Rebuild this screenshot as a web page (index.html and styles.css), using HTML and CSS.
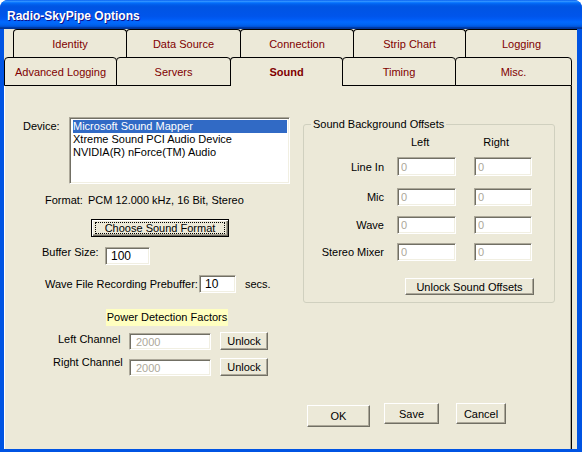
FILE: index.html
```html
<!DOCTYPE html>
<html lang="en">

<head>
    <meta charset="UTF-8">
    <meta name="viewport" content="width=device-width, initial-scale=1.0">
    <title>Radio-SkyPipe Options</title>
    <link rel="stylesheet" href="styles.css">
</head>

<body>
    <div class="window">
        <div class="titlebar">Radio-SkyPipe Options</div>
        <div class="client">
            <div class="tabrow back">
                <div class="tab">Identity</div>
                <div class="tab">Data Source</div>
                <div class="tab">Connection</div>
                <div class="tab">Strip Chart</div>
                <div class="tab">Logging</div>
            </div>
            <div class="tabrow front">
                <div class="tab">Advanced Logging</div>
                <div class="tab">Servers</div>
                <div class="tab active">Sound</div>
                <div class="tab">Timing</div>
                <div class="tab">Misc.</div>
            </div>
            <div class="panel">
                <div class="panel_body">
                    <div class="left_col">
                        <div class="device_row">
                            <label class="device_label">Device:</label>
                            <div class="listbox">
                                <div class="item selected">Microsoft Sound Mapper</div>
                                <div class="item">Xtreme Sound PCI Audio Device</div>
                                <div class="item">NVIDIA(R) nForce(TM) Audio</div>
                            </div>
                        </div>
                        <p class="format"><span class="format_label">Format:</span>PCM 12.000 kHz, 16 Bit, Stereo</p>
                        <button class="btn focused choose"><span>Choose Sound Format</span></button>
                        <div class="row buffer_row">
                            <label>Buffer Size:</label>
                            <input class="field" type="text" value="100">
                        </div>
                        <div class="row wave_row">
                            <label>Wave File Recording Prebuffer:</label>
                            <input class="field" type="text" value="10">
                            <span class="secs">secs.</span>
                        </div>
                        <div class="power">Power Detection Factors</div>
                        <div class="row channel_row left_ch">
                            <label>Left Channel</label>
                            <input class="field off" type="text" value="2000" disabled>
                            <button class="btn unlock">Unlock</button>
                        </div>
                        <div class="row channel_row right_ch">
                            <label>Right Channel</label>
                            <input class="field off" type="text" value="2000" disabled>
                            <button class="btn unlock">Unlock</button>
                        </div>
                    </div>

                    <fieldset class="offsets">
                        <legend>Sound Background Offsets</legend>
                        <div class="offset_head">
                            <span>Left</span>
                            <span>Right</span>
                        </div>
                        <div class="offset_row">
                            <label>Line In</label>
                            <input class="field off" type="text" value="0" disabled>
                            <input class="field off" type="text" value="0" disabled>
                        </div>
                        <div class="offset_row">
                            <label>Mic</label>
                            <input class="field off" type="text" value="0" disabled>
                            <input class="field off" type="text" value="0" disabled>
                        </div>
                        <div class="offset_row">
                            <label>Wave</label>
                            <input class="field off" type="text" value="0" disabled>
                            <input class="field off" type="text" value="0" disabled>
                        </div>
                        <div class="offset_row">
                            <label>Stereo Mixer</label>
                            <input class="field off" type="text" value="0" disabled>
                            <input class="field off" type="text" value="0" disabled>
                        </div>
                        <button class="btn unlock_offsets">Unlock Sound Offsets</button>
                    </fieldset>
                </div>

                <div class="footer">
                    <button class="btn ok">OK</button>
                    <button class="btn save">Save</button>
                    <button class="btn cancel">Cancel</button>
                </div>
            </div>
        </div>
    </div>
</body>

</html>
```

FILE: styles.css
```css
* {
    box-sizing: border-box;
}

body {
    margin: 0;
    font-family: "Liberation Sans", Arial, sans-serif;
    font-size: 11px;
    color: #000;
    background: #fff;
}

.window {
    width: 582px;
    height: 452px;
    background: #0054e3;
    border-radius: 8px 8px 0 0;
    display: flex;
    flex-direction: column;
    overflow: hidden;
}

.titlebar {
    height: 29px;
    flex: none;
    display: flex;
    align-items: center;
    padding: 2px 0 0 7px;
    color: #fff;
    font-size: 12px;
    font-weight: bold;
    text-shadow: 1px 1px #0f1089;
    background: linear-gradient(180deg, #0058ee 0%, #3593ff 4%, #288eff 6%, #127dff 8%, #036ffc 10%, #0262ee 14%, #0057e5 20%, #0054e3 24%, #0055eb 56%, #005bf5 66%, #026afe 76%, #0062ef 86%, #0052d6 92%, #0040ab 94%, #003092 100%);
}

.client {
    flex: 1;
    margin: 0 5px 3px 4px;
    background: #ece9d8;
    display: flex;
    flex-direction: column;
}

/* tabs */
.tabrow {
    display: flex;
    flex: none;
}

.tabrow.back {
    height: 28px;
    margin-left: 9px;
}

.tabrow.front {
    height: 29px;
}

.tab {
    display: flex;
    align-items: center;
    justify-content: center;
    margin-left: -1px;
    border: 1px solid #000;
    border-bottom: none;
    border-radius: 4px 4px 0 0;
    background: #ece9d8;
    color: #800000;
}

.tab:first-child {
    margin-left: 0;
}

.back .tab:nth-child(1) { width: 114px; }
.back .tab:nth-child(2) { width: 115px; }
.back .tab:nth-child(3) { width: 114px; }
.back .tab:nth-child(4) { width: 113px; }
.back .tab:nth-child(5) { flex: 1; border-right: none; border-top-right-radius: 0; }

.front .tab {
    border-bottom: 1px solid #000;
}

.front .tab:nth-child(1) { width: 113px; }
.front .tab:nth-child(2) { width: 115px; }
.front .tab:nth-child(3) { width: 113px; }
.front .tab:nth-child(4) { width: 114px; }
.front .tab:nth-child(5) { width: 117px; }

.front .tab.active {
    border-bottom: none;
    font-weight: bold;
}

/* panel */
.panel {
    flex: 1;
    width: 568px;
    border-left: 1px solid #fff;
    border-right: 1px solid #000;
    box-shadow: inset -1px 0 #aca899;
    display: flex;
    flex-direction: column;
}

.panel_body {
    display: flex;
    align-items: flex-start;
}

.left_col {
    width: 298px;
    flex: none;
    display: flex;
    flex-direction: column;
    align-items: flex-start;
}

label {
    line-height: 14px;
}

.device_row {
    display: flex;
    margin: 31px 0 0 18px;
}

.device_label {
    width: 46px;
    padding-top: 2px;
}

.listbox {
    width: 221px;
    height: 67px;
    padding: 2px;
    background: #fff;
    border: 1px solid;
    border-color: #aca899 #fff #fff #aca899;
    box-shadow: inset 1px 1px #716f64, inset -1px -1px #f1efe2;
}

.item {
    height: 13px;
    line-height: 13px;
    padding-left: 1px;
    white-space: nowrap;
}

.item.selected {
    margin-left: 1px;
    padding-left: 0;
    background: #316ac5;
    color: #fff;
}

.format {
    margin: 9px 0 0 40px;
    line-height: 14px;
}

.format_label {
    margin-right: 5px;
}

/* buttons */
.btn {
    font-family: "Liberation Sans", Arial, sans-serif;
    font-size: 11px;
    color: #000;
    background: #ece9d8;
    padding: 0;
    border: 1px solid;
    border-color: #fff #716f64 #716f64 #fff;
    box-shadow: inset -1px -1px #aca899;
}

.btn.focused {
    border-color: #000;
    box-shadow: inset 1px 1px #fff, inset -1px -1px #716f64, inset -2px -2px #aca899;
    display: flex;
    padding: 2px 3px;
}

.btn.focused span {
    flex: 1;
    border: 1px dotted #000;
    line-height: 10px;
}

.choose {
    width: 138px;
    height: 18px;
    margin: 12px 0 0 86px;
}

/* text fields */
.field {
    font-family: "Liberation Sans", Arial, sans-serif;
    font-size: 11px;
    color: #000;
    background: #fff;
    height: 18px;
    padding: 0 0 0 5px;
    border: 1px solid;
    border-color: #aca899 #fff #fff #aca899;
    box-shadow: inset 1px 1px #716f64, inset -1px -1px #f1efe2;
    outline: none;
}

.field.off {
    color: #aca899;
    padding-left: 3px;
}

.row {
    display: flex;
}

.buffer_row {
    margin: 8px 0 0 37px;
}

.buffer_row label {
    width: 63px;
}

.buffer_row .field {
    width: 45px;
    margin-top: 2px;
    font-size: 12px;
}

.wave_row {
    margin: 10px 0 0 40px;
    align-items: center;
}

.wave_row label {
    width: 154px;
}

.wave_row .field {
    width: 37px;
    font-size: 12px;
}

.secs {
    margin-left: 9px;
}

.power {
    width: 122px;
    height: 17px;
    line-height: 17px;
    margin: 16px 0 0 101px;
    text-align: center;
    background: #ffffc0;
}

.channel_row .field {
    width: 82px;
    height: 17px;
    margin-top: 1px;
    padding-left: 6px;
}

.unlock {
    width: 48px;
    height: 18px;
    margin-left: 9px;
}

.left_ch {
    margin: 6px 0 0 53px;
}

.left_ch label {
    width: 71px;
}

.right_ch {
    margin: 8px 0 0 48px;
}

.right_ch label {
    width: 76px;
    margin-top: -3px;
}

/* group box */
.offsets {
    width: 252px;
    margin: 31px 0 0 0;
    padding: 0 0 7px 0;
    border: 1px solid #d0d0bf;
    border-radius: 3px;
}

.offsets legend {
    margin-left: 7px;
    padding: 0 2px;
    line-height: 14px;
}

.offset_head {
    display: flex;
    margin-top: 4px;
    line-height: 14px;
}

.offset_head span:first-child {
    margin-left: 107px;
}

.offset_head span:last-child {
    margin-left: 54px;
}

.offset_row {
    display: flex;
    align-items: center;
}

.offset_row label {
    width: 80px;
    text-align: right;
}

.offset_row .field {
    width: 59px;
    margin-left: 13px;
}

.offset_row .field + .field {
    width: 58px;
    margin-left: 18px;
}

.offset_row:nth-of-type(2) { margin-top: 8px; }
.offset_row:nth-of-type(2) .field { height: 19px; }
.offset_row:nth-of-type(3) { margin-top: 12px; }
.offset_row:nth-of-type(4) { margin-top: 10px; }
.offset_row:nth-of-type(5) { margin-top: 9px; }

.unlock_offsets {
    width: 129px;
    height: 17px;
    margin: 17px 0 0 101px;
}

/* bottom buttons */
.footer {
    display: flex;
    align-items: flex-start;
    margin-top: 27px;
    padding-left: 302px;
}

.ok {
    width: 63px;
    height: 22px;
    margin-top: 2px;
}

.save {
    width: 55px;
    height: 21px;
    margin-left: 14px;
}

.cancel {
    width: 50px;
    height: 21px;
    margin-left: 17px;
}
```
